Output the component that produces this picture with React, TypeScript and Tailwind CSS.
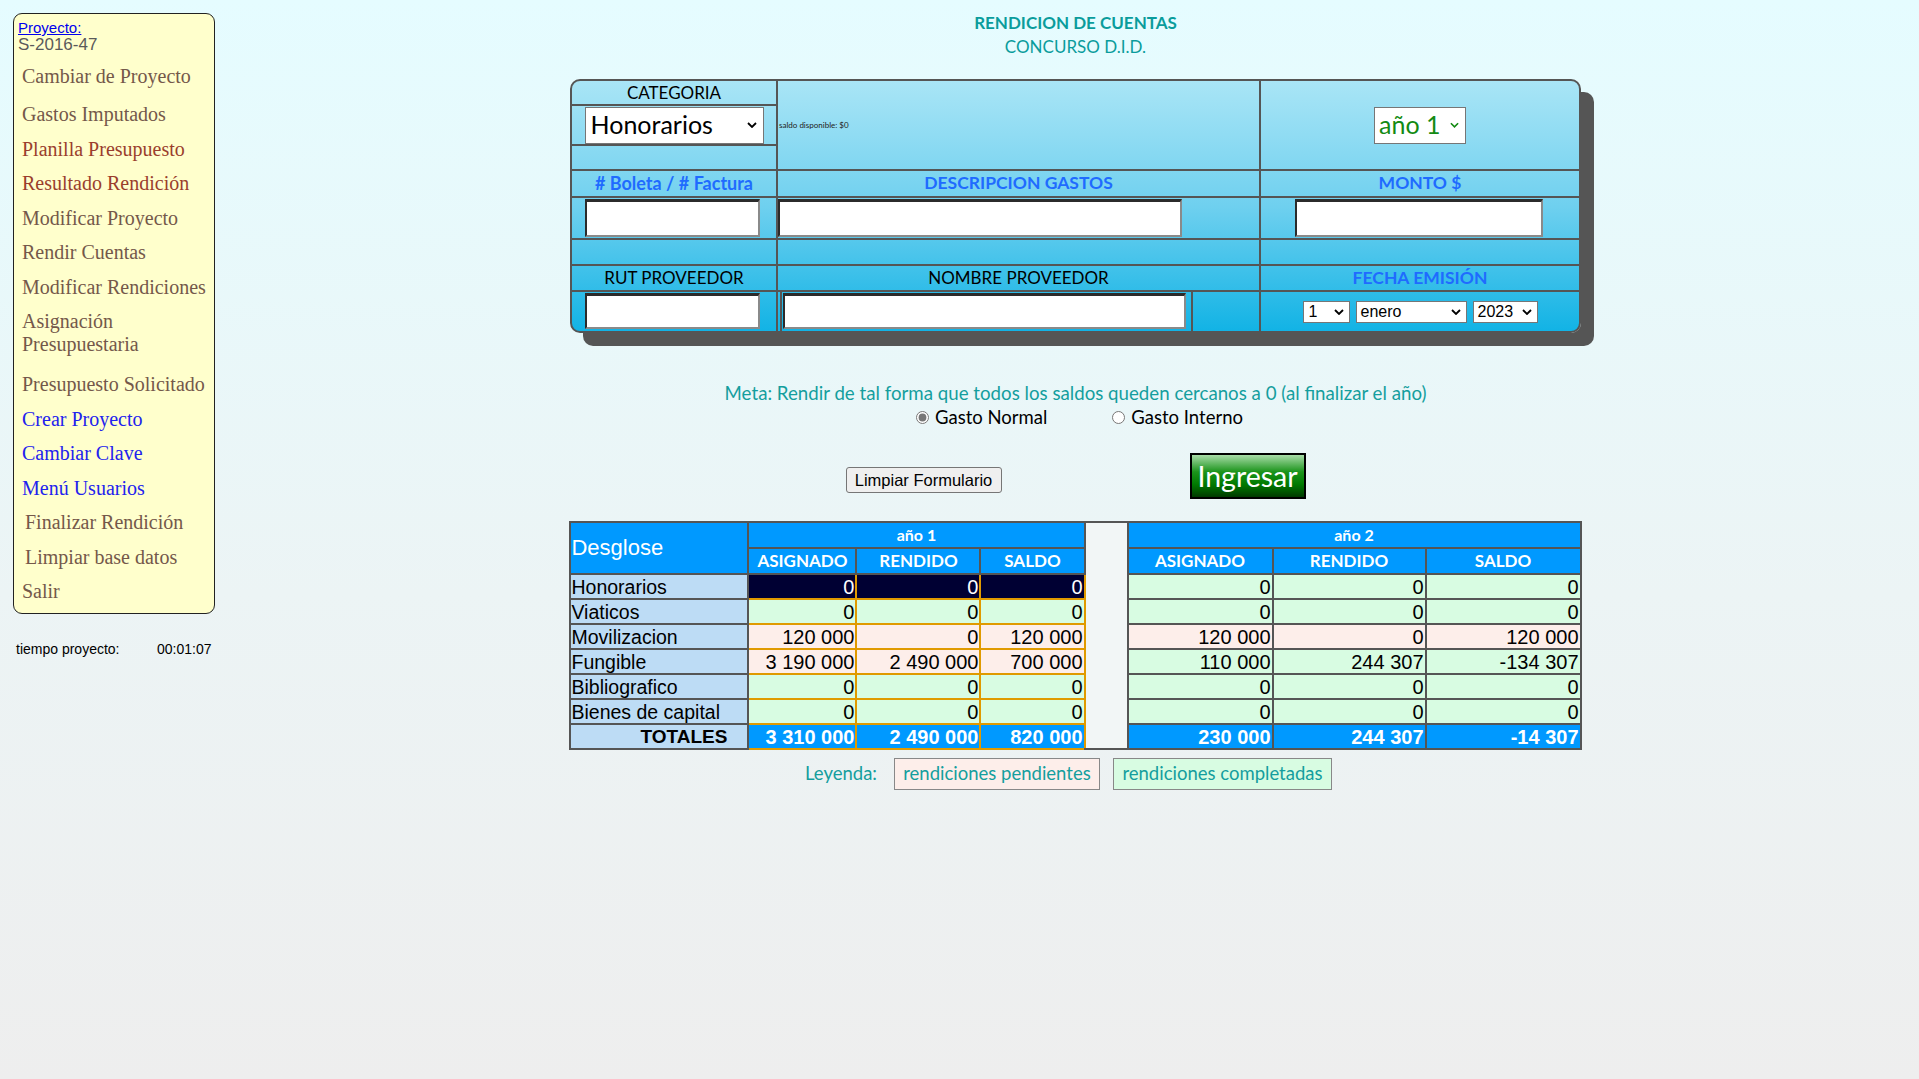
import React from "react";

const cal = "font-['Lato',sans-serif]";
const arial = "font-['Liberation_Sans',Arial,sans-serif]";
const serif = "font-['Liberation_Serif','Times_New_Roman',serif]";

const Chevron = ({ className = "" }: { className?: string }) => (
  <svg viewBox="0 0 10 6" className={className} fill="none">
    <polyline points="1,1 5,5 9,1" stroke="currentColor" strokeWidth="1.8" />
  </svg>
);

const FakeSelect = ({
  text,
  className,
  textClass,
  chevronClass,
}: {
  text: string;
  className: string;
  textClass: string;
  chevronClass: string;
}) => (
  <div className={`flex items-center justify-between bg-white border border-[#767676] ${className}`}>
    <span className={textClass}>{text}</span>
    <Chevron className={chevronClass} />
  </div>
);

const Input = ({ className }: { className: string }) => (
  <div
    className={`bg-white border-t-[3px] border-l-2 border-r-2 border-b-2 border-t-[#2b2b2b] border-l-[#2b2b2b] border-r-[#8a8a8a] border-b-[#8a8a8a] ${className}`}
  />
);

const menu = [
  { t: "Cambiar de Proyecto", c: "text-[#74584a]", x: "pl-[8px]", extra: "mb-[3.5px]" },
  { t: "Gastos Imputados", c: "text-[#74584a]", x: "pl-[8px]" },
  { t: "Planilla Presupuesto", c: "text-[#9a3e2c]", x: "pl-[8px]" },
  { t: "Resultado Rendición", c: "text-[#9a3e2c]", x: "pl-[8px]" },
  { t: "Modificar Proyecto", c: "text-[#74584a]", x: "pl-[8px]" },
  { t: "Rendir Cuentas", c: "text-[#74584a]", x: "pl-[8px]" },
  { t: "Modificar Rendiciones", c: "text-[#74584a]", x: "pl-[8px]" },
  { t: "Asignación Presupuestaria", c: "text-[#74584a]", x: "pl-[8px] pr-[40px]", extra: "mb-[5.5px]" },
  { t: "Presupuesto Solicitado", c: "text-[#74584a]", x: "pl-[8px]" },
  { t: "Crear Proyecto", c: "text-[#2222ee]", x: "pl-[8px]" },
  { t: "Cambiar Clave", c: "text-[#2222ee]", x: "pl-[8px]" },
  { t: "Menú Usuarios", c: "text-[#2222ee]", x: "pl-[8px]" },
  { t: "Finalizar Rendición", c: "text-[#74584a]", x: "pl-[11px]" },
  { t: "Limpiar base datos", c: "text-[#74584a]", x: "pl-[11px]" },
  { t: "Salir", c: "text-[#74584a]", x: "pl-[8px]" },
];

type Tone = "navy" | "green" | "pink";

const rows: { name: string; a: string[]; b: string[]; ta: Tone; tb: Tone }[] = [
  { name: "Honorarios", a: ["0", "0", "0"], b: ["0", "0", "0"], ta: "navy", tb: "green" },
  { name: "Viaticos", a: ["0", "0", "0"], b: ["0", "0", "0"], ta: "green", tb: "green" },
  { name: "Movilizacion", a: ["120 000", "0", "120 000"], b: ["120 000", "0", "120 000"], ta: "pink", tb: "pink" },
  { name: "Fungible", a: ["3 190 000", "2 490 000", "700 000"], b: ["110 000", "244 307", "-134 307"], ta: "pink", tb: "green" },
  { name: "Bibliografico", a: ["0", "0", "0"], b: ["0", "0", "0"], ta: "green", tb: "green" },
  { name: "Bienes de capital", a: ["0", "0", "0"], b: ["0", "0", "0"], ta: "green", tb: "green" },
];

const toneClass: Record<Tone, string> = {
  navy: "bg-[#000033] text-white",
  green: "bg-[#d8fce2] text-black",
  pink: "bg-[#fdeeea] text-black",
};

const cellBorder = "border-2 border-[#555]";
const hdr = `${cal} border-2 border-[#555] bg-[#0099ff] text-white font-bold`;

export default function App() {
  return (
    <div className="min-h-[1079px] w-full flex bg-[linear-gradient(to_bottom,#e5fcff_0%,#ecf4f5_55%,#eeeeee_100%)]">
      {/* sidebar */}
      <div className="w-[232px] shrink-0 pl-[13px] pt-[13px]">
        <div className="w-[202px] h-[601px] bg-[#ffffcc] border border-[#222] rounded-[9px] pt-[5px]">
          <div className={`${arial} pl-[4px] text-[15px] leading-[17px] text-[#0000ee] underline`}>Proyecto:</div>
          <div className={`${arial} pl-[4px] text-[17px] leading-[18px] text-[#5a5a5a]`}>S-2016-47</div>
          <div className={`${serif} text-[20px] leading-[23px] flex flex-col gap-[11.5px] mt-[11px]`}>
            {menu.map((m) => (
              <div key={m.t} className={`${m.c} ${m.x} ${m.extra ?? ""}`}>
                {m.t}
              </div>
            ))}
          </div>
        </div>
        <div className={`${arial} text-[14px] leading-[16px] text-black flex mt-[27px] pl-[3px]`}>
          <span className="w-[141px]">tiempo proyecto:</span>
          <span>00:01:07</span>
        </div>
      </div>

      {/* main */}
      <div className="flex-1 flex flex-col items-center">
        <div className={`${cal} mt-[11px] text-[17px] leading-[24px] font-bold text-[#0a9c9c]`}>RENDICION DE CUENTAS</div>
        <div className={`${cal} text-[17px] leading-[24px] text-[#0a9c9c]`}>CONCURSO D.I.D.</div>

        {/* form panel */}
        <div className="mt-[20px] w-[1011px] rounded-[10px] border-2 border-[#555] shadow-[13px_13px_0_#555] bg-[linear-gradient(to_bottom,#a9e5f6_0%,#6fd0ef_50%,#12b3e5_100%)] overflow-hidden">
          <div className={`${cal} grid grid-cols-[206px_483px_1fr] grid-rows-[25px_40px_25px_27px_42px_26px_26px_39px]`}>
            <div className="border-r-2 border-b-2 border-[#555] flex items-center justify-center text-[17px] text-black">CATEGORIA</div>
            <div className="row-span-3 border-r-2 border-b-2 border-[#555] flex items-center">
              <span className="text-[8px] text-[#222] pl-[1px]">saldo disponible: $0</span>
            </div>
            <div className="row-span-3 border-b-2 border-[#555] flex items-center justify-center">
              <FakeSelect
                text="año 1"
                className="w-[92px] h-[37px] pl-[4px] pr-[6px]"
                textClass="text-[25px] text-[#138a13]"
                chevronClass="w-[9px] h-[6px] text-[#138a13]"
              />
            </div>
            <div className="border-r-2 border-b-2 border-[#555] flex items-center justify-center">
              <FakeSelect
                text="Honorarios"
                className="w-[179px] h-[37px] pl-[5px] pr-[6px]"
                textClass="text-[25px] text-black"
                chevronClass="w-[10px] h-[6px] text-black"
              />
            </div>
            <div className="border-r-2 border-b-2 border-[#555]" />

            <div className="border-r-2 border-b-2 border-[#555] flex items-center justify-center text-[18px] font-bold text-[#1f6bff]"># Boleta / # Factura</div>
            <div className="border-r-2 border-b-2 border-[#555] flex items-center justify-center text-[17.5px] font-bold text-[#1f6bff]">DESCRIPCION GASTOS</div>
            <div className="border-b-2 border-[#555] flex items-center justify-center text-[17.5px] font-bold text-[#1f6bff]">MONTO $</div>

            <div className="border-r-2 border-b-2 border-[#555] flex items-stretch pl-[13px] py-[1px]">
              <Input className="w-[175px]" />
            </div>
            <div className="border-r-2 border-b-2 border-[#555] flex items-stretch py-[1px]">
              <Input className="w-[404px]" />
            </div>
            <div className="border-b-2 border-[#555] flex items-stretch pl-[34px] py-[1px]">
              <Input className="w-[248px]" />
            </div>

            <div className="border-r-2 border-b-2 border-[#555]" />
            <div className="border-r-2 border-b-2 border-[#555]" />
            <div className="border-b-2 border-[#555]" />

            <div className="border-r-2 border-b-2 border-[#555] flex items-center justify-center text-[17px] text-black">RUT PROVEEDOR</div>
            <div className="border-r-2 border-b-2 border-[#555] flex items-center justify-center text-[17px] text-black">NOMBRE PROVEEDOR</div>
            <div className="border-b-2 border-[#555] flex items-center justify-center text-[17.5px] font-bold text-[#1f6bff]">FECHA EMISIÓN</div>

            <div className="border-r-2 border-[#555] flex items-stretch pl-[13px] pt-[1px] pb-[2px]">
              <Input className="w-[175px]" />
            </div>
            <div className="border-r-2 border-[#555] flex items-stretch">
              <div className="w-[4px] border-r-2 border-[#555]" />
              <div className="flex items-stretch pl-[1px] pr-[5px] pt-[1px] pb-[2px] border-r-2 border-[#555]">
                <Input className="w-[403px]" />
              </div>
            </div>
            <div className={`${arial} flex items-center justify-center gap-[6px]`}>
              <FakeSelect text="1" className="w-[47px] h-[22px] pl-[5px] pr-[5px]" textClass="text-[16px] text-black" chevronClass="w-[10px] h-[6px] text-black" />
              <FakeSelect text="enero" className="w-[111px] h-[22px] pl-[4px] pr-[5px]" textClass="text-[16px] text-black" chevronClass="w-[10px] h-[6px] text-black" />
              <FakeSelect text="2023" className="w-[65px] h-[22px] pl-[4px] pr-[5px]" textClass="text-[16px] text-black" chevronClass="w-[10px] h-[6px] text-black" />
            </div>
          </div>
        </div>

        {/* meta + radios */}
        <div className={`${cal} mt-[48px] text-[18.7px] leading-[24px] text-[#149e9e]`}>
          Meta: Rendir de tal forma que todos los saldos queden cercanos a 0 (al finalizar el año)
        </div>
        <div className={`${cal} flex items-center text-[18.5px] leading-[24px] text-black pl-[8px]`}>
          <label className="flex items-center gap-[6px]">
            <input type="radio" name="gasto" defaultChecked className="w-[13px] h-[13px] accent-[#777]" />
            Gasto Normal
          </label>
          <label className="flex items-center gap-[6px] ml-[65px]">
            <input type="radio" name="gasto" className="w-[13px] h-[13px] accent-[#777]" />
            Gasto Interno
          </label>
        </div>

        {/* buttons */}
        <div className="mt-[24px] flex items-end">
          <button className={`${arial} mb-[6px] w-[156px] h-[26px] bg-[#efefef] border border-[#767676] rounded-[3px] text-[16.5px] text-black`}>
            Limpiar Formulario
          </button>
          <button className={`${cal} ml-[188px] w-[116px] h-[46px] border-2 border-black text-white text-[28.5px] bg-[linear-gradient(to_bottom,#a8dca8_0%,#1c941c_40%,#007a00_70%,#003a00_100%)]`}>
            Ingresar
          </button>
        </div>

        {/* summary table */}
        <table className="mt-[22px] w-[1010px] table-fixed border-collapse border-2 border-[#555]">
          <colgroup>
            <col className="w-[178px]" />
            <col className="w-[108px]" />
            <col className="w-[124px]" />
            <col className="w-[104px]" />
            <col className="w-[43px]" />
            <col className="w-[145px]" />
            <col className="w-[153px]" />
            <col className="w-[155px]" />
          </colgroup>
          <tbody className={`${arial} text-[20px] leading-[20px]`}>
            <tr className="h-[26px]">
              <td rowSpan={2} className={`${arial} ${cellBorder} bg-[#0099ff] text-white text-[22px] text-left`}>
                Desglose
              </td>
              <td colSpan={3} className={`${hdr} text-[16px] leading-[20px] text-center`}>año 1</td>
              <td rowSpan={9} className="border-l border-b-2 border-l-[#999] border-b-[#555] bg-[#f2f6f6]" />
              <td colSpan={3} className={`${hdr} text-[16px] leading-[20px] text-center`}>año 2</td>
            </tr>
            <tr className="h-[26px]">
              {["ASIGNADO", "RENDIDO", "SALDO", "ASIGNADO ", "RENDIDO ", "SALDO "].map((h) => (
                <td key={h} className={`${hdr} text-[17px] leading-[20px] text-center`}>{h.trim()}</td>
              ))}
            </tr>
            {rows.map((r) => (
              <tr key={r.name} className="h-[25px]">
                <td className={`${cellBorder} bg-[#bddcf5] text-black text-[19.5px] whitespace-nowrap`}>{r.name}</td>
                {r.a.map((v, i) => (
                  <td key={"a" + i} className={`border-2 border-[#e09a00] text-right pr-[1px] whitespace-nowrap ${toneClass[r.ta]}`}>{v}</td>
                ))}
                {r.b.map((v, i) => (
                  <td key={"b" + i} className={`${cellBorder} text-right pr-[1px] whitespace-nowrap ${toneClass[r.tb]}`}>{v}</td>
                ))}
              </tr>
            ))}
            <tr className="h-[25px] font-bold">
              <td className={`${cellBorder} bg-[#bddcf5] text-black text-[19px] text-right pr-[20px]`}>TOTALES</td>
              {["3 310 000", "2 490 000", "820 000"].map((v) => (
                <td key={v} className="border-2 border-[#e09a00] bg-[#0099ff] text-white text-right pr-[1px] whitespace-nowrap">{v}</td>
              ))}
              {["230 000", "244 307", "-14 307"].map((v) => (
                <td key={v} className={`${cellBorder} bg-[#0099ff] text-white text-right pr-[1px] whitespace-nowrap`}>{v}</td>
              ))}
            </tr>
          </tbody>
        </table>

        {/* legend */}
        <div className={`${cal} mt-[8px] flex items-center text-[18.5px] text-[#149e9e] pr-[14px]`}>
          <span className="mr-[17px]">Leyenda:</span>
          <span className="w-[206px] h-[32px] flex items-center justify-center bg-[#fdeeea] border border-[#888]">rendiciones pendientes</span>
          <span className="ml-[13px] w-[219px] h-[32px] flex items-center justify-center bg-[#d8fce2] border border-[#888]">rendiciones completadas</span>
        </div>
      </div>
    </div>
  );
}
